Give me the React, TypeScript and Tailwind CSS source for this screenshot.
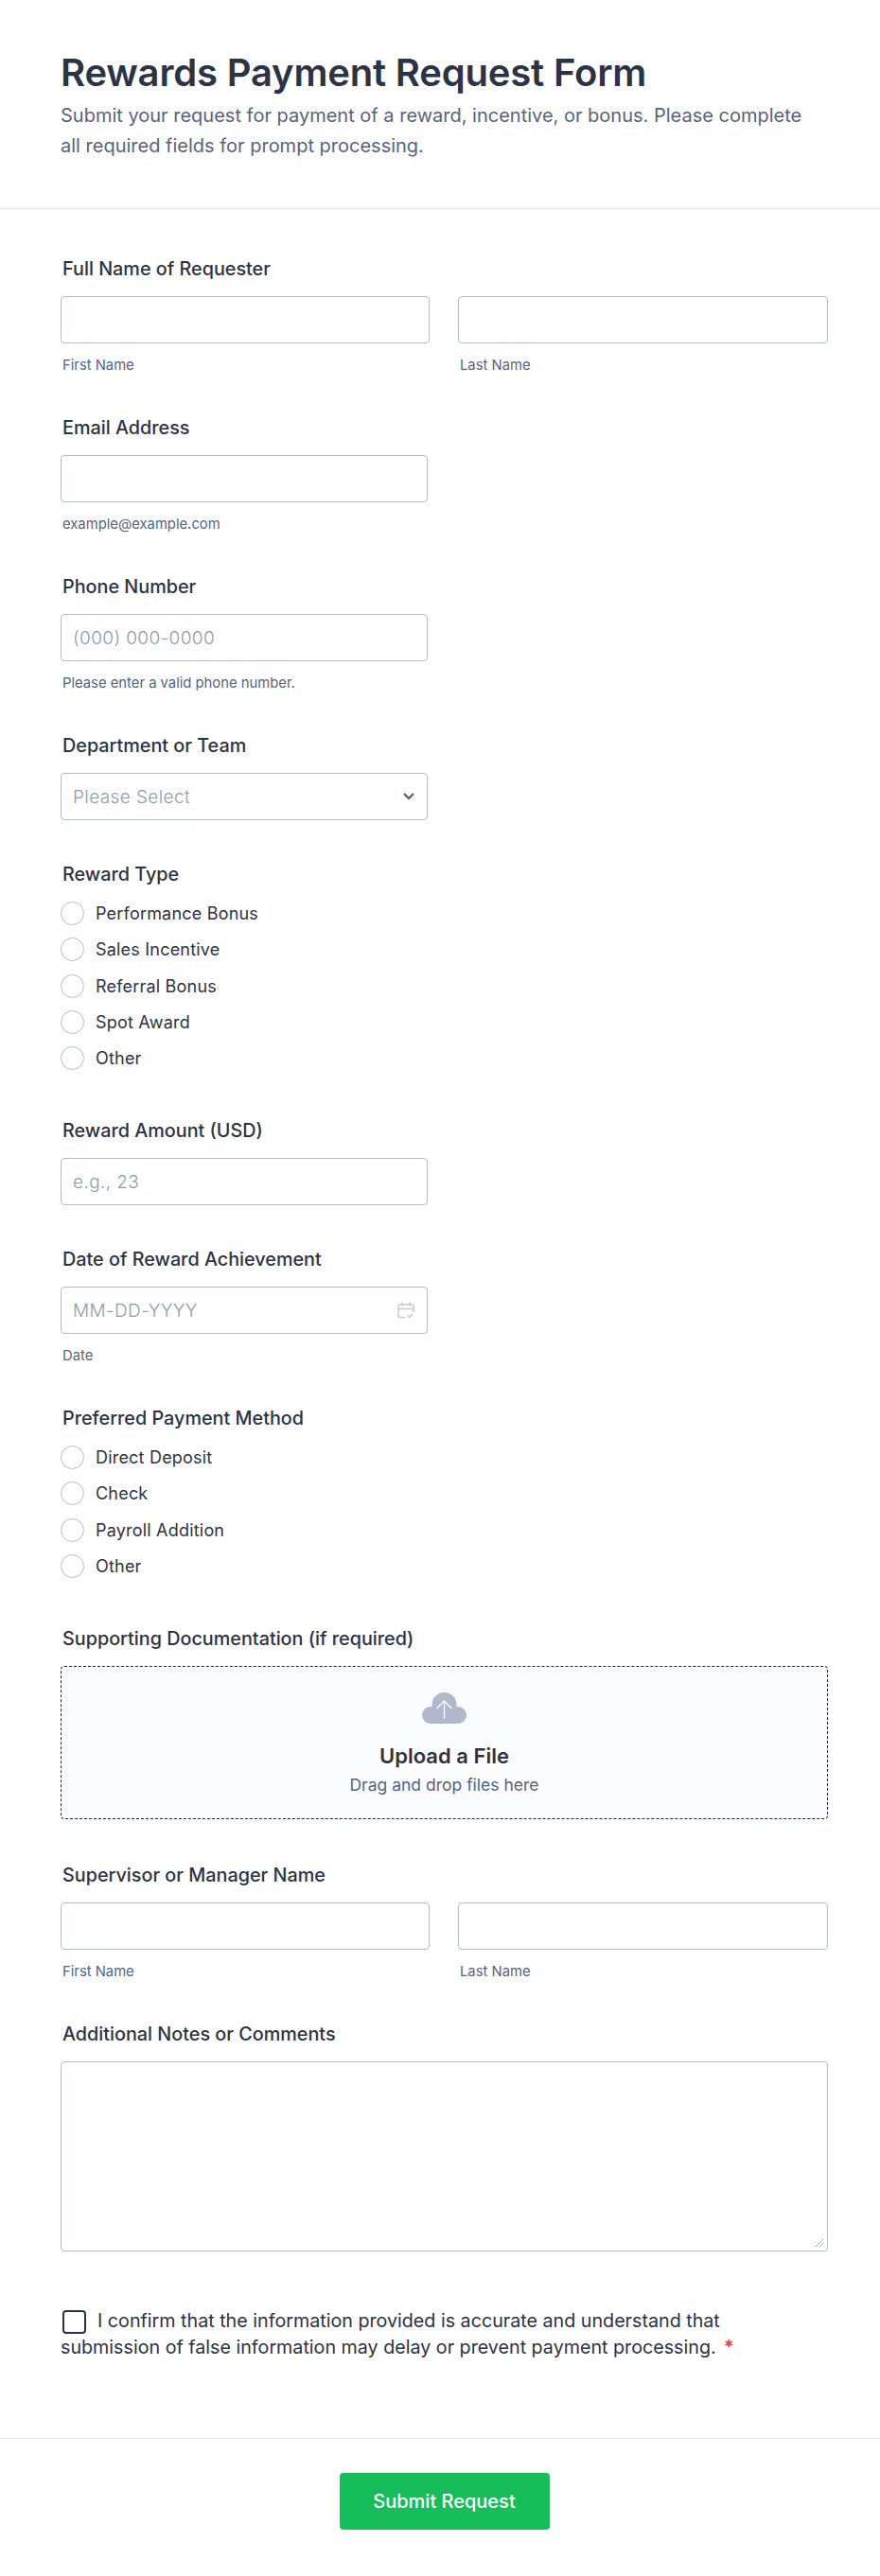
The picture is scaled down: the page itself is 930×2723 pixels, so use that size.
const font = "font-['Inter',sans-serif]"

function Label({ children }: { children: React.ReactNode }) {
  return <div className="ml-[2px] text-[19.8px] leading-[24px] font-medium text-[#2c3345] mb-[17px]">{children}</div>
}

function Input({ placeholder, className = "w-[388px]", children }: { placeholder?: string; className?: string; children?: React.ReactNode }) {
  return (
    <div className={`h-[50px] rounded-[4px] border border-[#b4bbca] bg-white pl-[12px] pr-[13px] flex items-center justify-between text-[19px] tracking-[0.4px] font-light text-[#8e9bb0] ${className}`}>
      <span className="pt-[2px]">{placeholder}</span>
      {children}
    </div>
  )
}

function Sub({ children }: { children: React.ReactNode }) {
  return <div className="ml-[2px] mt-[13px] text-[14.8px] leading-[20px] text-[#57647e]">{children}</div>
}

function NameField({ label }: { label: string }) {
  return (
    <div className="h-[168px]">
      <Label>{label}</Label>
      <div className="flex gap-[30px]">
        <div className="w-[390px]">
          <Input className="w-full" />
          <Sub>First Name</Sub>
        </div>
        <div className="w-[391px]">
          <Input className="w-full" />
          <Sub>Last Name</Sub>
        </div>
      </div>
    </div>
  )
}

function RadioGroup({ label, options, height }: { label: string; options: string[]; height: string }) {
  return (
    <div className={height}>
      <Label>{label}</Label>
      <div className="mt-[2px] flex flex-col gap-[13.25px]">
        {options.map((o) => (
          <div key={o} className="flex items-center h-[25px] text-[18px] tracking-[0.2px] text-[#2c3345]">
            <span className="w-[25px] h-[25px] rounded-full border border-[#b8bdc9] bg-white mr-[12px]" />
            {o}
          </div>
        ))}
      </div>
    </div>
  )
}

export default function App() {
  return (
    <div className={`${font} w-[930px] h-[2723px] bg-white flex flex-col`}>
      <div className="h-[221px] border-b border-[#e3e5ea] px-[64px] pt-[51px]">
        <h1 className="text-[40px] leading-[52px] tracking-[-0.18px] font-semibold text-[#2c3345]">Rewards Payment Request Form</h1>
        <p className="mt-[3px] text-[20px] leading-[32px] text-[#57647e] w-[800px]">
          Submit your request for payment of a reward, incentive, or bonus. Please complete all required fields for prompt processing.
        </p>
      </div>
      <div className="pl-[64px] pr-[55px] pt-[51px] flex-1">
        <NameField label="Full Name of Requester" />
        <div className="h-[168px]">
          <Label>Email Address</Label>
          <Input />
          <Sub>example@example.com</Sub>
        </div>
        <div className="h-[168px]">
          <Label>Phone Number</Label>
          <Input placeholder="(000) 000-0000" />
          <Sub>Please enter a valid phone number.</Sub>
        </div>
        <div className="h-[136px]">
          <Label>Department or Team</Label>
          <Input placeholder="Please Select">
            <svg width="12" height="8" viewBox="0 0 12 8" fill="none" stroke="#4f5a72" strokeWidth="2.2">
              <path d="M1 1l5 5 5-5" />
            </svg>
          </Input>
        </div>
        <RadioGroup label="Reward Type" options={["Performance Bonus", "Sales Incentive", "Referral Bonus", "Spot Award", "Other"]} height="h-[271px]" />
        <div className="h-[136px]">
          <Label>Reward Amount (USD)</Label>
          <Input placeholder="e.g., 23" />
        </div>
        <div className="h-[168px]">
          <Label>Date of Reward Achievement</Label>
          <Input placeholder="MM-DD-YYYY">
            <svg width="18" height="20" viewBox="0 0 18 20" fill="none" stroke="#c3cad8" strokeWidth="1.5">
              <path d="M8 17.5H2.5A1.5 1.5 0 0 1 1 16V5.5A1.5 1.5 0 0 1 2.5 4h13A1.5 1.5 0 0 1 17 5.5V12M1 8.5h16M5 1.5v4M13 1.5v4M10.5 15.5l2 2 3.5-3.5" />
            </svg>
          </Input>
          <Sub>Date</Sub>
        </div>
        <RadioGroup label="Preferred Payment Method" options={["Direct Deposit", "Check", "Payroll Addition", "Other"]} height="h-[233px]" />
        <div className="h-[250px]">
          <Label>Supporting Documentation (if required)</Label>
          <div className="h-[162px] rounded-[4px] border border-dashed border-[#232838] bg-[#fbfcff] flex flex-col items-center pt-[27px]">
            <svg width="47" height="33" viewBox="0 0 47 33">
              <g fill="#b1b8cb">
                <circle cx="23.5" cy="13" r="13" />
                <circle cx="9" cy="24" r="9" />
                <circle cx="38" cy="24" r="9" />
                <rect x="9" y="18" width="29" height="15" />
              </g>
              <path d="M23.5 28V9.5M15.5 17l8-8 8 8" stroke="#fff" strokeWidth="1.3" fill="none" />
            </svg>
            <div className="mt-[20px] text-[22px] leading-[28px] font-semibold text-[#2c3345]">Upload a File</div>
            <div className="mt-[5px] text-[17.5px] leading-[24px] text-[#57647e]">Drag and drop files here</div>
          </div>
        </div>
        <NameField label="Supervisor or Manager Name" />
        <div className="h-[301px]">
          <Label>Additional Notes or Comments</Label>
          <div className="h-[201px] rounded-[4px] border border-[#b4bbca] flex items-end justify-end p-[3px]">
            <svg width="10" height="10" viewBox="0 0 10 10" stroke="#a8adb8" fill="none">
              <path d="M1 9l8-8M5 9l4-4" />
            </svg>
          </div>
        </div>
        <div className="max-w-[800px] text-[19.7px] leading-[28px] text-[#2c3345]">
          <span className="inline-block w-[25px] h-[25px] ml-[2px] rounded-[4px] border-2 border-[#2c3345] align-middle mr-[12px]" />
          I confirm that the information provided is accurate and understand that submission of false information may delay or prevent payment processing.
          <span className="ml-[8px] text-[#f23a3c] font-bold">*</span>
        </div>
      </div>
      <div className="h-[146px] border-t border-[#e3e8f0] pl-[64px] pr-[55px] flex justify-center pt-[36px]">
        <div className="w-[222px] h-[60px] rounded-[4px] bg-[#18bd5b] text-white text-[20px] font-medium flex items-center justify-center">Submit Request</div>
      </div>
    </div>
  )
}
